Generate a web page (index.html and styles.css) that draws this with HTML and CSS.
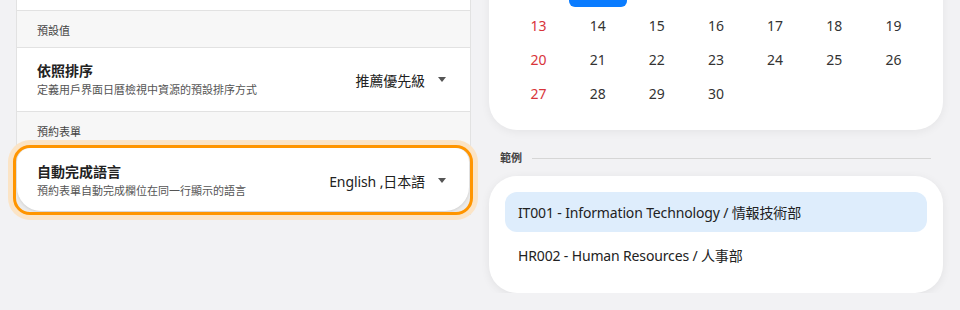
FILE: index.html
```html
<!DOCTYPE html>
<html lang="zh-Hant">
<head>
  <meta charset="UTF-8">
  <title>設定</title>
  <link rel="stylesheet" href="styles.css">
</head>
<body>

  <div class="page">

    <!-- Settings list -->
    <div class="settings">
      <div class="settings-top"></div>

      <div class="section-head">預設值</div>
      <div class="row">
        <div class="row-text">
          <div class="row-title">依照排序</div>
          <div class="row-sub">定義用戶界面日曆檢視中資源的預設排序方式</div>
        </div>
        <div class="row-value">推薦優先級 <span class="caret"></span></div>
      </div>

      <div class="section-head">預約表單</div>
      <div class="focus-ring">
        <div class="row row-card">
          <div class="row-text">
            <div class="row-title">自動完成語言</div>
            <div class="row-sub">預約表單自動完成欄位在同一行顯示的語言</div>
          </div>
          <div class="row-value">English ,日本語 <span class="caret"></span></div>
        </div>
      </div>
    </div>

    <!-- Preview column -->
    <div class="preview">
      <div class="calendar">
        <!-- previous week, scrolled out of view -->
        <div class="week">
          <span class="day"></span><span class="day selected"></span><span class="day"></span><span class="day"></span><span class="day"></span><span class="day"></span><span class="day"></span>
        </div>
        <div class="week">
          <span class="day sun">13</span><span class="day">14</span><span class="day">15</span><span class="day">16</span><span class="day">17</span><span class="day">18</span><span class="day">19</span>
        </div>
        <div class="week">
          <span class="day sun">20</span><span class="day">21</span><span class="day">22</span><span class="day">23</span><span class="day">24</span><span class="day">25</span><span class="day">26</span>
        </div>
        <div class="week">
          <span class="day sun">27</span><span class="day">28</span><span class="day">29</span><span class="day">30</span><span class="day"></span><span class="day"></span><span class="day"></span>
        </div>
      </div>

      <div class="example-label"><span>範例</span><div class="line"></div></div>

      <div class="example">
        <div class="option active">IT001 - Information Technology / 情報技術部</div>
        <div class="option">HR002 - Human Resources / 人事部</div>
      </div>
    </div>

  </div>

</body>
</html>
```

FILE: styles.css
```css
* {
  box-sizing: border-box;
  margin: 0;
  padding: 0;
}

body {
  background: #f2f2f4;
  color: #222;
  font-family: 'Noto Sans', 'Noto Sans CJK TC', sans-serif;
  overflow: hidden;
}

.page {
  display: flex;
  align-items: flex-start;
  gap: 18px;
  padding-left: 16px;
}

/* Settings list */
.settings {
  width: 455px;
  background: #f7f7f7;
  border-left: 1px solid #e2e2e2;
  border-right: 1px solid #e2e2e2;
}

.settings-top {
  height: 11px;
  background: #fff;
  border-bottom: 1px solid #e2e2e2;
}

.section-head {
  padding: 13px 20px 9px;
  font-size: 11px;
  line-height: 14px;
  color: #444;
}

.row {
  display: flex;
  align-items: center;
  justify-content: space-between;
  padding: 13px 24px 13px 20px;
  background: #fff;
  border-top: 1px solid #e2e2e2;
  border-bottom: 1px solid #e2e2e2;
}

.row-title {
  font-size: 14px;
  line-height: 20px;
  font-weight: bold;
  color: #222;
}

.row-sub {
  margin-top: 1px;
  font-size: 11px;
  line-height: 16px;
  color: #555;
}

.row-value {
  display: flex;
  align-items: center;
  gap: 13px;
  font-size: 14px;
  letter-spacing: -0.1px;
  color: #222;
}

.caret {
  width: 0;
  height: 0;
  border-left: 4.5px solid transparent;
  border-right: 4.5px solid transparent;
  border-top: 5px solid #555;
}

/* Focused row */
.focus-ring {
  margin: -3px -3px 0 -4px;
  border: 3px solid #ff9500;
  border-radius: 17px;
  background: #ebebeb;
  box-shadow: 0 0 0 5px #fbe4c6;
  overflow: hidden;
}

.row-card {
  border: none;
  margin: 0 1px 1px 1px;
  padding: 14px 23px 12px 20px;
  border-radius: 14px 14px 24px 24px;
  box-shadow: 0 1px 3px rgba(0, 0, 0, 0.12);
}

/* Preview column */
.preview {
  width: 454px;
}

.calendar {
  margin-top: -26px;
  padding: 0 20px 20px;
  background: #fff;
  border-radius: 0 0 28px 28px;
  box-shadow: 0 2px 10px rgba(0, 0, 0, 0.06);
}

.week {
  display: grid;
  grid-template-columns: repeat(7, 1fr);
  height: 34px;
}

.day {
  display: flex;
  align-items: center;
  justify-content: center;
  font-size: 14px;
  color: #333;
}

.day.sun {
  color: #d8343a;
}

.day.selected {
  margin: 1px 0.5px 1px;
  border-radius: 6px;
  background: #0a7cff;
}

.example-label {
  display: flex;
  align-items: center;
  gap: 10px;
  margin: 20px 12px 10px 11px;
  font-size: 11px;
  line-height: 16px;
  font-weight: bold;
  color: #444;
}

.example-label .line {
  flex: 1;
  height: 1px;
  background: #d6d6d6;
}

.example {
  display: flex;
  flex-direction: column;
  gap: 3px;
  padding: 16px 16px 18px;
  background: #fff;
  border-radius: 28px;
  box-shadow: 0 2px 10px rgba(0, 0, 0, 0.07);
}

.option {
  height: 40px;
  display: flex;
  align-items: center;
  padding-left: 13px;
  border-radius: 12px;
  font-size: 14px;
  letter-spacing: -0.15px;
  color: #222;
}

.option.active {
  background: #deedfc;
}
```
